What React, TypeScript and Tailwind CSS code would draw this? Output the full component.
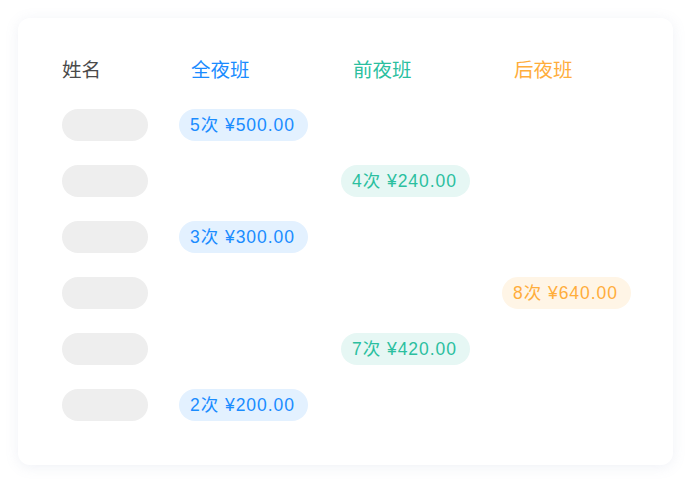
const columns = [
  { key: 'all', label: '全夜班', text: 'text-[#1a8cff]', badge: 'bg-[#e3f1ff] text-[#1a8cff]' },
  { key: 'early', label: '前夜班', text: 'text-[#2bbf9f]', badge: 'bg-[#e6f7f4] text-[#2bbf9f]' },
  { key: 'late', label: '后夜班', text: 'text-[#ffad3b]', badge: 'bg-[#fff5e6] text-[#ffad3b]' },
];

const rows = [
  { col: 0, count: 5, amount: '500.00' },
  { col: 1, count: 4, amount: '240.00' },
  { col: 0, count: 3, amount: '300.00' },
  { col: 2, count: 8, amount: '640.00' },
  { col: 1, count: 7, amount: '420.00' },
  { col: 0, count: 2, amount: '200.00' },
];

export default function App() {
  return (
    <div
      className="min-h-screen bg-white p-[18px]"
      style={{ fontFamily: '"Liberation Sans", "Noto Sans CJK SC", sans-serif' }}
    >
      <div className="w-[655px] h-[447px] rounded-xl bg-white shadow-[0_2px_14px_rgba(120,140,180,0.12)] pl-[44px] pt-[38px]">
        <div className="grid grid-cols-[117px_162px_161px_161px] h-6 items-center text-[19.5px] mb-[29px]">
          <div className="text-[#4a4a4a]">姓名</div>
          {columns.map((c) => (
            <div key={c.key} className={`pl-3 ${c.text}`}>{c.label}</div>
          ))}
        </div>
        <div className="flex flex-col gap-6">
          {rows.map((r, i) => (
            <div key={i} className="grid grid-cols-[117px_162px_161px_161px] h-8 items-center">
              <div className="w-[86px] h-8 rounded-full bg-[#eeeeee]" />
              {columns.map((c, ci) => (
                <div key={c.key}>
                  {ci === r.col && (
                    <span className={`inline-flex items-center h-8 pl-[11px] pr-[13px] rounded-full text-[17.5px] tracking-[0.95px] ${c.badge}`}>
                      {r.count}次 ¥{r.amount}
                    </span>
                  )}
                </div>
              ))}
            </div>
          ))}
        </div>
      </div>
    </div>
  );
}
